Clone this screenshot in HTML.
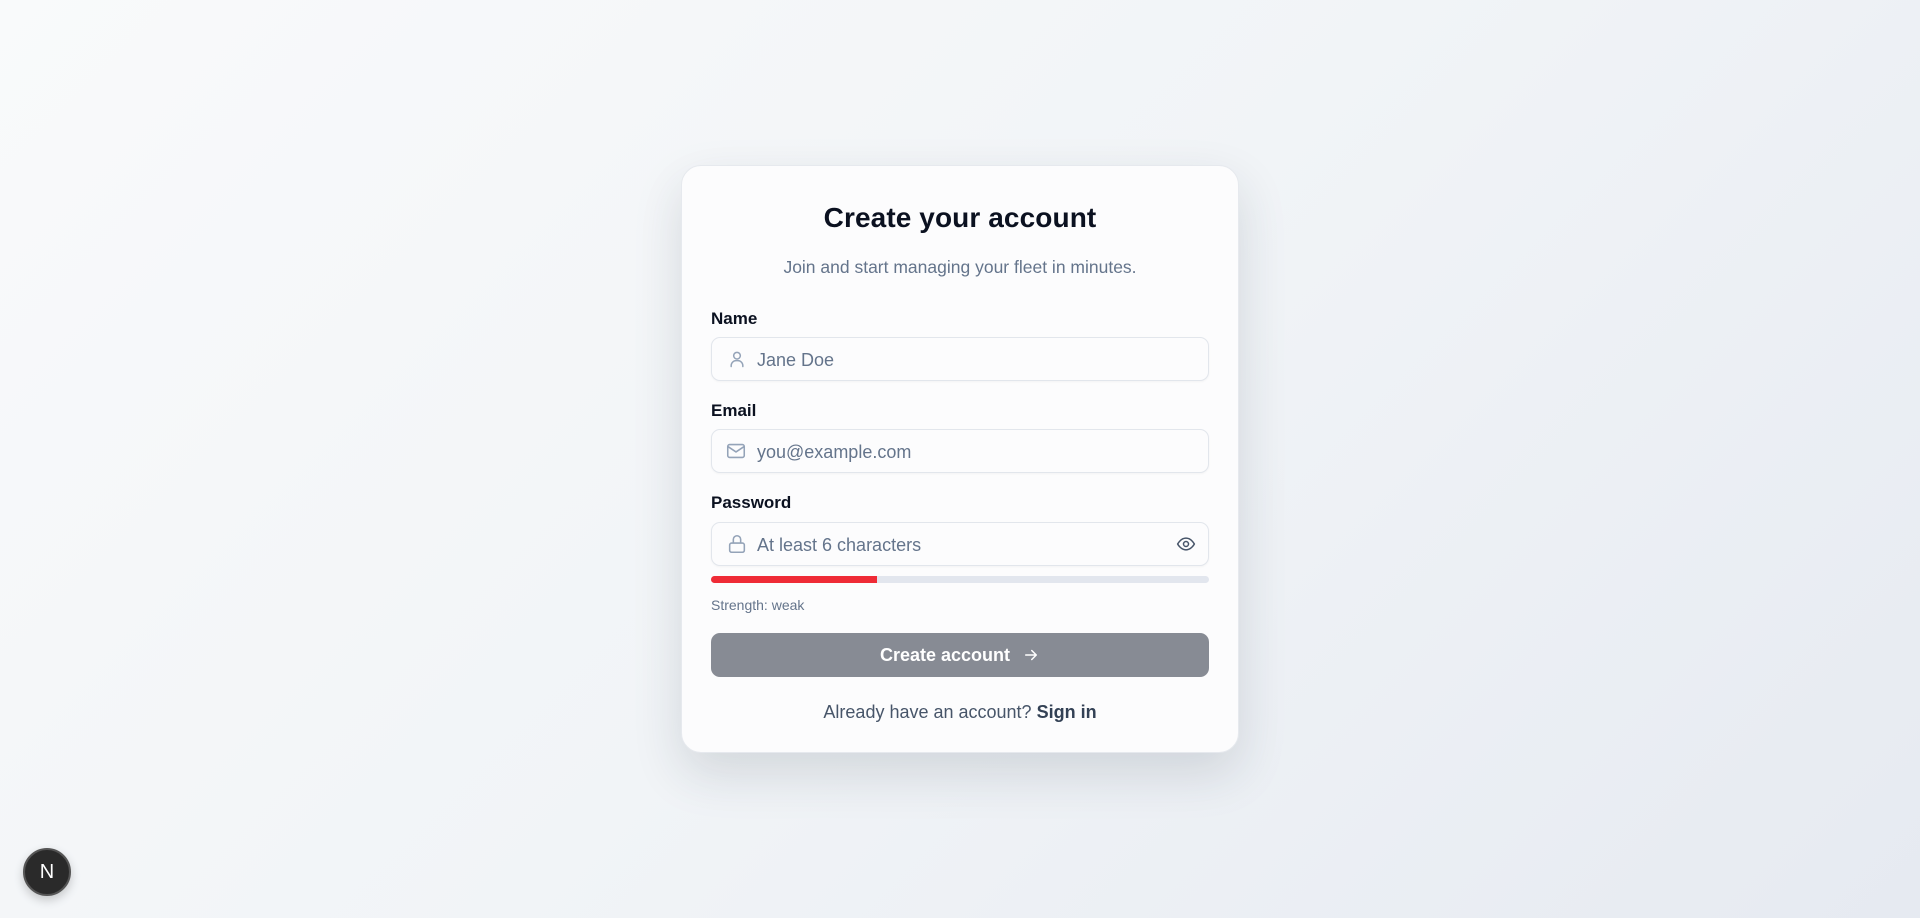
<!DOCTYPE html>
<html><head><meta charset="utf-8"><style>
*{box-sizing:border-box;margin:0;padding:0}
html,body{width:1920px;height:918px;overflow:hidden}
body{font-family:"Liberation Sans",sans-serif;background:linear-gradient(135deg,#f9fafb 0%,#f1f4f7 50%,#e6eaf1 100%);position:relative}
.card{position:absolute;left:681px;top:165px;width:558px;height:588px;background:#fcfcfd;border:1px solid #e6e9ee;border-radius:20px;box-shadow:0 20px 50px rgba(30,40,60,.14)}
h1{position:absolute;left:0;right:0;top:202px;text-align:center;font-size:28px;font-weight:600;color:#0b1120;letter-spacing:.1px}
.sub{position:absolute;left:0;right:0;top:257px;text-align:center;font-size:17.5px;color:#64748b}
.lbl{position:absolute;left:711px;font-size:17px;font-weight:bold;color:#0b1120}
.inp{position:absolute;left:711px;width:498px;height:44px;border:1px solid #e2e6ec;border-radius:9px;background:#fcfcfd;box-shadow:0 1px 2px rgba(0,0,0,.04)}
.inp span{position:absolute;left:45px;top:12px;font-size:18px;color:#64748b}
.inp svg{position:absolute}
.bar{position:absolute;left:711px;top:576px;width:498px;height:7px;border-radius:4px;background:#e2e6ee;overflow:hidden}
.bar div{width:166px;height:100%;background:#ef2b36}
.str{position:absolute;left:711px;top:597px;font-size:14px;color:#64748b}
.btn{position:absolute;left:711px;top:633px;width:498px;height:44px;border-radius:9px;background:#878b94;color:#fff;font-size:18px;font-weight:bold;display:flex;align-items:center;justify-content:center;gap:12px}
.foot{position:absolute;left:0;width:1920px;top:702px;text-align:center;font-size:18px;color:#475569}
.foot b{color:#334155}
.n{position:absolute;left:23px;top:848px;width:48px;height:48px;border-radius:50%;background:#2a2a2a;border:2px solid #555;color:#fff;font-size:20px;display:flex;align-items:center;justify-content:center;box-shadow:0 4px 10px rgba(0,0,0,.2)}
</style></head><body>
<div class="card"></div>
<h1>Create your account</h1>
<div class="sub">Join and start managing your fleet in minutes.</div>
<div class="lbl" style="top:309px">Name</div>
<div class="inp" style="top:337px"><svg style="left:15px;top:11px" width="20" height="20" viewBox="0 0 24 24" fill="none" stroke="#94a3b8" stroke-width="1.8" stroke-linecap="round"><circle cx="12" cy="8" r="4"/><path d="M5 21v-1a6 6 0 0 1 6-6h2a6 6 0 0 1 6 6v1"/></svg><span>Jane Doe</span></div>
<div class="lbl" style="top:401px">Email</div>
<div class="inp" style="top:429px"><svg style="left:13px;top:10px" width="22" height="22" viewBox="0 0 24 24" fill="none" stroke="#94a3b8" stroke-width="1.7" stroke-linejoin="round"><rect x="3" y="5" width="18" height="14" rx="2"/><path d="M3 7l9 6 9-6"/></svg><span>you@example.com</span></div>
<div class="lbl" style="top:493px">Password</div>
<div class="inp" style="top:522px"><svg style="left:14px;top:10px" width="22" height="22" viewBox="0 0 24 24" fill="none" stroke="#94a3b8" stroke-width="1.7"><rect x="4" y="11" width="16" height="10" rx="2"/><path d="M8 11V7a4 4 0 0 1 8 0v4"/></svg><span>At least 6 characters</span><svg style="left:463px;top:11px" width="22" height="20" viewBox="0 0 24 24" fill="none" stroke="#475569" stroke-width="1.8"><path d="M2 12s3.5-7 10-7 10 7 10 7-3.5 7-10 7S2 12 2 12z"/><circle cx="12" cy="12" r="3"/></svg></div>
<div class="bar"><div></div></div>
<div class="str">Strength: weak</div>
<div class="btn">Create account <svg width="18" height="18" viewBox="0 0 24 24" fill="none" stroke="#fff" stroke-width="2" stroke-linecap="round" stroke-linejoin="round"><path d="M5 12h14M13 6l6 6-6 6"/></svg></div>
<div class="foot">Already have an account? <b>Sign in</b></div>
<div class="n">N</div>
</body></html>
